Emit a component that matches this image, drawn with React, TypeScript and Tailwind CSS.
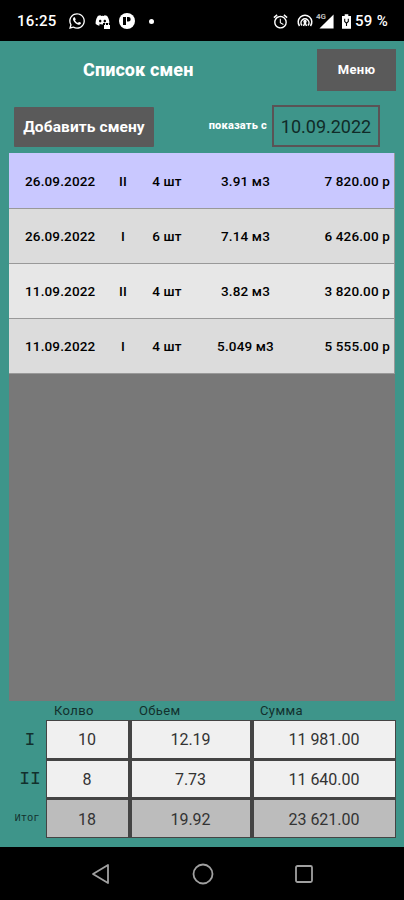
import { FaDiscord, FaWhatsapp } from 'react-icons/fa';
import { MdAlarm, MdSignalCellular4Bar } from 'react-icons/md';

const shifts = [
  { date: '26.09.2022', shift: 'II', count: '4 шт', volume: '3.91 м3', sum: '7 820.00 р', style: 'h-[56px] pt-[2px] bg-[#c9c8ff]' },
  { date: '26.09.2022', shift: 'I', count: '6 шт', volume: '7.14 м3', sum: '6 426.00 р', style: 'h-[55px] bg-[#dcdcdc]' },
  { date: '11.09.2022', shift: 'II', count: '4 шт', volume: '3.82 м3', sum: '3 820.00 р', style: 'h-[55px] bg-[#e7e7e7]' },
  { date: '11.09.2022', shift: 'I', count: '4 шт', volume: '5.049 м3', sum: '5 555.00 р', style: 'h-[55px] bg-[#dcdcdc]' },
];

const totals = [
  { label: 'I', count: '10', volume: '12.19', sum: '11 981.00' },
  { label: 'II', count: '8', volume: '7.73', sum: '11 640.00' },
  { label: 'Итог', count: '18', volume: '19.92', sum: '23 621.00' },
];

function StatusBar() {
  return (
    <div className="flex h-[41px] items-center bg-black pl-[17px] pr-[16px] pt-px text-[15px] font-medium text-white">
      <span className="w-[41px] whitespace-nowrap tracking-[0.3px]">16:25</span>
      <FaWhatsapp className="ml-[10px] size-[18px]" />
      {/* Messenger with a small lock */}
      <span className="relative ml-[9px] h-[16px] w-[16px]">
        <FaDiscord className="size-[15px]" />
        <svg className="absolute bottom-0 right-0 size-[8px]" viewBox="0 0 8 8">
          <path d="M0 2h8v6H0z" fill="black" />
          <path d="M1 4h6v4H1z" fill="white" />
          <path d="M2.5 4V2.5a1.5 1.5 0 0 1 3 0V4" fill="none" stroke="white" />
        </svg>
      </span>
      <svg className="ml-[8px] size-[16px]" viewBox="0 0 16 16">
        <circle cx="8" cy="8" r="8" fill="white" />
        <path d="M4 4h3v8H4zM8 4h1.5a2.2 2.2 0 0 1 0 4.4H8z" fill="black" />
      </svg>
      <span className="ml-[14px] size-[5px] rounded-full bg-white" />
      <MdAlarm className="ml-auto size-[17px]" />
      <svg className="ml-[8px] h-[14px] w-[16px]" viewBox="0 0 16 14" fill="none" stroke="currentColor" strokeWidth="1.5">
        <path d="M2.5 12a6.8 6.8 0 1 1 11 0M5 11.5a4 4 0 1 1 6 0" />
        <path d="M8 8.5 6.5 12M8 8.5 9.5 12" />
        <circle cx="8" cy="7.5" r="1" fill="currentColor" />
      </svg>
      <span className="relative ml-[5px] size-[17px]">
        <MdSignalCellular4Bar className="size-[17px]" />
        <span className="absolute left-[-2px] top-0 text-[8px] leading-[8px] font-bold text-[#bbb]">4G</span>
      </span>
      <svg className="ml-[7px] h-[15px] w-[9px]" viewBox="0 0 10 16">
        <path d="M3 0h4v2h3v14H0V2h3z" fill="white" />
        <path d="M3 5v3l2 2 2-2V5M5 10v3" fill="none" stroke="black" strokeWidth="1.2" />
      </svg>
      <span className="ml-[4px] whitespace-nowrap tracking-[0.3px]">59 %</span>
    </div>
  );
}

export default function App() {
  return (
    <div className="flex h-[900px] w-[404px] flex-col overflow-hidden bg-[#3e958a] font-[Roboto,sans-serif] text-black">
      <StatusBar />

      <header className="flex h-[57px] items-center pl-[83px] pr-[8px]">
        <h1 className="whitespace-nowrap text-[18px] font-extrabold tracking-[0.1px] text-white">Список смен</h1>
        <button className="ml-auto h-[42px] w-[79px] bg-[#5a5a5a] text-[13px] font-bold tracking-[0.3px] text-white">Меню</button>
      </header>

      {/* Add button + date filter */}
      <div className="flex h-[55px] items-center pl-[14px] pr-[24px]">
        <button className="mt-[3px] h-[40px] w-[140px] whitespace-nowrap rounded-[1px] bg-[#5a5a5a] pt-px text-[15.5px] font-bold tracking-[0.1px] text-white">Добавить смену</button>
        <span className="ml-auto whitespace-nowrap pt-px text-[11px] font-extrabold tracking-[0.2px] text-white">показать с</span>
        <div className="ml-[5px] flex h-[42px] w-[108px] items-center justify-center border-2 border-[#5a5355] pt-px text-[18px] text-[#102b28]">10.09.2022</div>
      </div>

      {/* Shift list */}
      <div className="mx-[9px] h-[548px] bg-[#787878]">
        {shifts.map((s, i) => (
          <div key={i} className={`flex items-center border-b border-r border-[#999] pl-[16px] pr-[4px] text-[13.5px] font-medium tracking-[0.15px] whitespace-nowrap ${s.style}`}>
            <span className="w-[71px]">{s.date}</span>
            <span className="w-[54px] text-center">{s.shift}</span>
            <span className="w-[34px] text-center">{s.count}</span>
            <span className="w-[123px] text-center">{s.volume}</span>
            <span className="flex-1 text-right">{s.sum}</span>
          </div>
        ))}
      </div>

      {/* Totals */}
      <div className="h-[146px]">
        <div className="flex h-[19px] items-center pt-px text-[13px] tracking-[0.4px] text-[#12302d]">
          <span className="ml-[54px] w-[85px]">Колво</span>
          <span className="w-[121px]">Обьем</span>
          <span>Сумма</span>
        </div>
        <div className="flex h-[118px]">
          <div className="flex w-[46px] flex-col pl-[14px] font-['Liberation_Mono',monospace] text-[#12302d]">
            {totals.map((t) => (
              <span key={t.label} className={`flex h-[39px] w-[33px] items-center justify-center pt-[2px] ${t.label === 'Итог' ? 'pr-[7px] text-[10.5px]' : 'pr-px text-[18px]'}`}>{t.label}</span>
            ))}
          </div>
          <div className="grid w-[350px] grid-cols-[81px_118px_1fr] grid-rows-3 gap-x-[4px] gap-y-[3px] border border-[#444] bg-[#444] text-[16px] text-[#333]">
            {totals.flatMap((t) =>
              [t.count, t.volume, t.sum].map((value, i) => (
                <div key={t.label + i} className={`flex items-center justify-center pt-[2px] pr-px ${t.label === 'Итог' ? 'bg-[#bcbcbc]' : 'bg-[#f0f0f0]'}`}>{value}</div>
              ))
            )}
          </div>
        </div>
      </div>

      {/* Android navigation */}
      <nav className="flex flex-1 items-center justify-between bg-black pl-[91px] pr-[89px]">
        <svg className="size-[22px]" viewBox="0 0 22 22" fill="none" stroke="#a0a0a0" strokeWidth="1.8" strokeLinejoin="round">
          <path d="M2 11 17 2v18z" />
        </svg>
        <svg className="size-[22px]" viewBox="0 0 22 22" fill="none" stroke="#a0a0a0" strokeWidth="1.8">
          <circle cx="11" cy="11" r="9.5" />
        </svg>
        <svg className="size-[22px]" viewBox="0 0 22 22" fill="none" stroke="#a0a0a0" strokeWidth="1.8">
          <rect x="3" y="3" width="16" height="16" rx="1.5" />
        </svg>
      </nav>
    </div>
  );
}
